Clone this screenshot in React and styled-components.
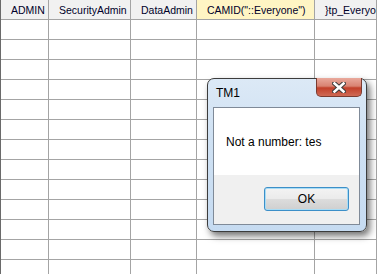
import React from 'react'
import styled, { createGlobalStyle } from 'styled-components'

const GlobalStyle = createGlobalStyle`
  html, body {
    margin: 0;
    padding: 0;
    background: #ffffff;
    overflow: hidden;
  }
`

const Page = styled.div`
  position: relative;
  width: 377px;
  height: 274px;
  overflow: hidden;
  background: #ffffff;
  font-family: "Liberation Sans", Arial, sans-serif;
`

const Sheet = styled.div`
  display: grid;
  grid-template-columns: 48px 82px 66px 118px 1fr;
  grid-auto-rows: 20px;
  border-left: 1px solid #6a6a6a;
  box-sizing: border-box;
`

const HeadCell = styled.div`
  box-sizing: border-box;
  padding-left: 10px;
  display: flex;
  align-items: center;
  white-space: nowrap;
  overflow: hidden;
  font-size: 10.5px;
  color: #00002a;
  background: ${p => (p.$active ? '#fff5c4' : '#f1f1f1')};
  border-right: 1px solid #a4a4a4;
  border-bottom: 1px solid #a4a4a4;
`

const Cell = styled.div`
  box-sizing: border-box;
  border-right: 1px solid #a4a4a4;
  border-bottom: 1px solid #a4a4a4;
`

const Window = styled.div`
  position: absolute;
  left: 207px;
  top: 78px;
  width: 160px;
  height: 154px;
  box-sizing: border-box;
  border: 1px solid #3c3c3c;
  border-radius: 7px;
  background: linear-gradient(180deg, #dce9f6 0%, #cfe1f3 40%, #c6dbf1 100%);
  box-shadow: 3px 4px 7px rgba(0, 0, 0, 0.55);
  display: flex;
  flex-direction: column;
  padding: 0 6px 6px 5px;
`

const TitleBar = styled.div`
  position: relative;
  height: 28px;
  display: flex;
  align-items: center;
  padding-left: 3px;
  font-size: 12px;
  color: #000000;
`

const CloseButton = styled.div`
  position: absolute;
  top: -1px;
  right: -2px;
  width: 46px;
  height: 19px;
  box-sizing: border-box;
  border: 1px solid #7a3b30;
  border-top: none;
  border-radius: 0 0 5px 5px;
  background: linear-gradient(180deg, #e9a99c 0%, #d98372 45%, #c2402a 55%, #cf6a55 100%);
  display: flex;
  align-items: center;
  justify-content: center;
`

const Client = styled.div`
  flex: 1;
  display: flex;
  flex-direction: column;
  border: 1px solid #7f8a98;
  background: #f0f0f0;
`

const Message = styled.div`
  height: 67px;
  background: #ffffff;
  display: flex;
  align-items: center;
  padding-left: 12px;
  font-size: 12px;
  color: #000000;
`

const Footer = styled.div`
  flex: 1;
  display: flex;
  justify-content: flex-end;
  align-items: flex-start;
  padding: 12px 10px 0 0;
`

const OkButton = styled.div`
  width: 85px;
  height: 24px;
  box-sizing: border-box;
  border: 1px solid #3c8fc8;
  border-radius: 3px;
  background: linear-gradient(180deg, #f3f3f3 0%, #ebebeb 48%, #dcdcdc 52%, #cfcfcf 100%);
  box-shadow: inset 0 0 0 1px #a8dcf5;
  display: flex;
  align-items: center;
  justify-content: center;
  font-size: 12px;
  color: #000000;
`

const headers = ['ADMIN', 'SecurityAdmin', 'DataAdmin', 'CAMID("::Everyone")', '}tp_Everyone']
const rows = Array.from({ length: 13 })

export default function App() {
  return (
    <Page>
      <GlobalStyle />
      <Sheet>
        {headers.map((h, i) => (
          <HeadCell key={h} $active={i === 3}>{h}</HeadCell>
        ))}
        {rows.map((_, r) =>
          headers.map((h, c) => <Cell key={r + '-' + c} />)
        )}
      </Sheet>
      <Window>
        <TitleBar>
          TM1
          <CloseButton>
            <svg width="14" height="11" viewBox="0 0 14 11">
              <path d="M2.5 1.5 L11.5 9.5 M11.5 1.5 L2.5 9.5" stroke="#3a3a3a" strokeWidth="4.6" strokeLinecap="square" />
              <path d="M2.5 1.5 L11.5 9.5 M11.5 1.5 L2.5 9.5" stroke="#ffffff" strokeWidth="2.6" strokeLinecap="square" />
            </svg>
          </CloseButton>
        </TitleBar>
        <Client>
          <Message>Not a number: tes</Message>
          <Footer>
            <OkButton>OK</OkButton>
          </Footer>
        </Client>
      </Window>
    </Page>
  )
}
